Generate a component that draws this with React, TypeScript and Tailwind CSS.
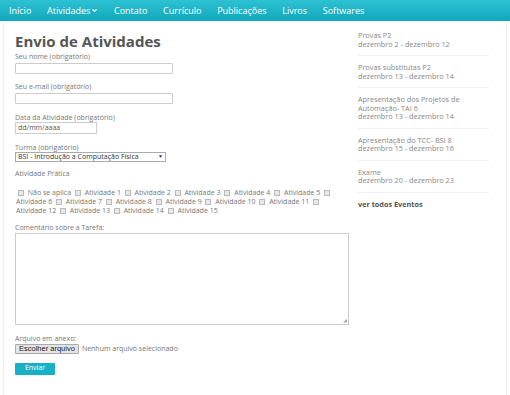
import { ChevronDown } from "lucide-react";

const navItems = ["Início", "Atividades", "Contato", "Currículo", "Publicações", "Livros", "Softwares"];

const events = [
  { title: "Provas P2", date: "dezembro 2 - dezembro 12" },
  { title: "Provas substitutas P2", date: "dezembro 13 - dezembro 14" },
  { title: "Apresentação dos Projetos de Automação- TAI 6", date: "dezembro 13 - dezembro 14" },
  { title: "Apresentação do TCC- BSI 8", date: "dezembro 15 - dezembro 16" },
  { title: "Exame", date: "dezembro 20 - dezembro 23" },
];

const activities = [
  "Não se aplica",
  ...Array.from({ length: 15 }, (_, i) => `Atividade ${i + 1}`),
];

function Box() {
  return (
    <span className="mx-[2px] inline-block h-[6px] w-[6px] border border-[#bbb] bg-[#e8e8e8] align-middle" />
  );
}

export default function App() {
  return (
    <div
      className="h-[395px] w-[510px] overflow-hidden bg-white text-[#777]"
      style={{ fontFamily: '"Open Sans", sans-serif' }}
    >
      <nav className="flex h-[21px] items-center gap-[15.7px] bg-gradient-to-b from-[#2cc1d3] to-[#0fa7bc] pl-[9px] text-[9px] text-white">
        {navItems.map((item, i) => (
          <span key={item} className="flex items-center">
            {item}
            {i === 1 && <ChevronDown className="ml-[1px] h-[7px] w-[7px]" strokeWidth={4} />}
          </span>
        ))}
      </nav>

      <div className="mx-[3px] flex h-[374px] border-x border-[#f0f0f0]">
        <main className="w-[345px] pl-[11px] pt-[10px] text-[7px]">
          <h1 className="text-[15px] leading-[20px] font-bold text-[#555]">Envio de Atividades</h1>

          <label className="mt-[2px] block leading-[8px]">Seu nome (obrigatório)</label>
          <div className="mt-[2px] h-[11px] w-[158px] rounded-[1px] border border-[#ccc]" />

          <label className="mt-[9px] block leading-[8px]">Seu e-mail (obrigatório)</label>
          <div className="mt-[2px] h-[11px] w-[158px] rounded-[1px] border border-[#ccc]" />

          <label className="mt-[10px] block leading-[8px]">Data da Atividade (obrigatório)</label>
          <div className="flex h-[12px] w-[82px] items-center border border-[#ccc] pl-[2px] text-[7px] text-[#555]">
            dd/mm/aaaa
          </div>

          <label className="mt-[10px] block leading-[8px]">Turma (obrigatório)</label>
          <div className="flex h-[10px] w-[151px] items-center justify-between border border-[#aaa] px-[2px] text-[7px] text-[#333]">
            <span>BSI - Introdução a Computação Física</span>
            <span className="text-[5px]">▼</span>
          </div>

          <p className="mt-[8px] leading-[8px]">Atividade Prática</p>
          <p className="mt-[10px] w-[322px] pl-[1px] leading-[9px]">
            {activities.map((a) => (
              <span key={a}>
                <Box /> {a}{" "}
              </span>
            ))}
          </p>

          <p className="mt-[9px] leading-[8px]">Comentário sobre a Tarefa:</p>
          <div className="relative mt-[1px] h-[92px] w-[334px] border border-[#ccc]">
            <span className="absolute right-[1px] bottom-[1px] text-[5px] leading-none text-[#aaa]">◢</span>
          </div>

          <p className="mt-[10px] leading-[8px]">Arquivo em anexo:</p>
          <div className="mt-[1px] flex items-center gap-[3px]">
            <span
              className="rounded-[1px] border border-[#aaa] bg-[#e4e4e4] px-[3px] text-[7.5px] leading-[8px] text-[#222]"
              style={{ fontFamily: '"Liberation Sans", sans-serif' }}
            >
              Escolher arquivo
            </span>
            <span className="text-[7px]">Nenhum arquivo selecionado</span>
          </div>

          <button className="mt-[8px] block h-[12px] w-[40px] rounded-[1px] bg-[#17b0c4] text-[7px] text-white">
            Enviar
          </button>
        </main>

        <aside className="w-[140px] pl-[9px] pt-[10px] text-[7.3px] leading-[8.5px] text-[#888]">
          {events.map((e) => (
            <div key={e.title} className="mb-[7px] border-b border-[#f2f2f2] pb-[7px]">
              <p className="w-[110px]">{e.title}</p>
              <p>{e.date}</p>
            </div>
          ))}
          <p className="font-bold text-[#555]">ver todos Eventos</p>
        </aside>
      </div>
    </div>
  );
}
